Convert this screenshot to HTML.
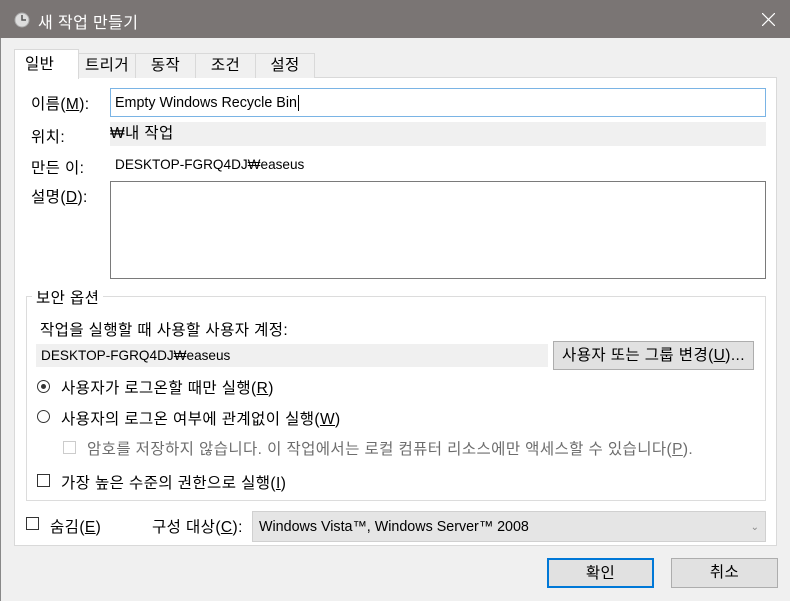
<!DOCTYPE html>
<html><head><meta charset="utf-8"><style>
*{box-sizing:border-box;margin:0;padding:0}
body{width:790px;height:601px;background:#f0f0f0;font-family:"Liberation Sans","Noto Sans CJK KR",sans-serif;font-size:15.5px;letter-spacing:.4px;color:#000;position:relative;overflow:hidden}
.a{position:absolute;white-space:nowrap}
.l{font-size:14px;letter-spacing:0}
.title{left:0;top:0;width:790px;height:38px;background:#7a7574;color:#fff;font-size:16px}
.panel{left:14px;top:77px;width:763px;height:469px;background:#fff;border:1px solid #d9d9d9}
.tab{top:53px;height:25px;background:#f0f0f0;border:1px solid #d9d9d9;border-bottom:none;text-align:center;line-height:24px}
.field{background:#f0f0f0}
.btn{background:#e1e1e1;border:1px solid #adadad;text-align:center}
.box{width:13px;height:13px;border:1px solid #333;background:#fff}
.rad{width:13px;height:13px;border:1px solid #333;border-radius:50%;background:#fff}
u{text-decoration:underline}
</style></head><body>
<div class="a" style="left:0;top:38px;width:1px;height:563px;background:#888"></div>
<div class="a title">
 <svg class="a" style="left:14px;top:12px" width="16" height="16"><circle cx="8" cy="8" r="7" fill="#ddd" stroke="#aaa"/><path d="M8 3v5h4" stroke="#555" stroke-width="1.5" fill="none"/></svg>
 <span class="a" style="left:38px;top:9px">새 작업 만들기</span>
 <svg class="a" style="left:762px;top:13px" width="13" height="13"><path d="M0 0L13 13M13 0L0 13" stroke="#fff" stroke-width="1.2"/></svg>
</div>
<div class="a panel"></div>
<div class="a tab" style="left:78px;width:58px">트리거</div>
<div class="a tab" style="left:135px;width:61px">동작</div>
<div class="a tab" style="left:195px;width:61px">조건</div>
<div class="a tab" style="left:255px;width:60px">설정</div>
<div class="a" style="left:14px;top:49px;width:65px;height:30px;background:#fff;border:1px solid #d9d9d9;border-bottom:none;padding-left:10px;line-height:30px">일반</div>

<div class="a" style="left:31px;top:92px">이름(<u>M</u>):</div>
<div class="a l" style="left:110px;top:88px;width:656px;height:29px;border:1px solid #7ab4e5;background:#fff;padding-left:4px;line-height:29px;font-size:14.3px">Empty Windows Recycle Bin<span style="border-left:1px solid #000;margin-left:1px"></span></div>
<div class="a" style="left:31px;top:125px">위치:</div>
<div class="a field" style="left:110px;top:122px;width:656px;height:24px;line-height:23px">₩내 작업</div>
<div class="a" style="left:31px;top:156px">만든 이:</div>
<div class="a l" style="left:115px;top:157px;font-size:13.6px">DESKTOP-FGRQ4DJ₩easeus</div>
<div class="a" style="left:31px;top:185px">설명(<u>D</u>):</div>
<div class="a" style="left:110px;top:181px;width:656px;height:98px;border:1px solid #7a7a7a;background:#fff"></div>

<div class="a" style="left:26px;top:296px;width:740px;height:205px;border:1px solid #dcdcdc"></div>
<div class="a" style="left:32px;top:286px;background:#fff;padding:0 4px">보안 옵션</div>
<div class="a" style="left:40px;top:318px">작업을 실행할 때 사용할 사용자 계정:</div>
<div class="a field l" style="left:36px;top:344px;width:512px;height:23px;padding-left:5px;line-height:23px;font-size:13.6px">DESKTOP-FGRQ4DJ₩easeus</div>
<div class="a btn" style="left:553px;top:341px;width:201px;height:29px;line-height:27px">사용자 또는 그룹 변경(<u>U</u>)...</div>
<div class="a rad" style="left:37px;top:380px"></div><div class="a" style="left:41px;top:384px;width:5px;height:5px;border-radius:50%;background:#333"></div>
<div class="a" style="left:61px;top:376px">사용자가 로그온할 때만 실행(<u>R</u>)</div>
<div class="a rad" style="left:37px;top:410px"></div>
<div class="a" style="left:61px;top:407px">사용자의 로그온 여부에 관계없이 실행(<u>W</u>)</div>
<div class="a box" style="left:63px;top:441px;border-color:#ccc"></div>
<div class="a" style="left:87px;top:437px;color:#6d6d6d">암호를 저장하지 않습니다. 이 작업에서는 로컬 컴퓨터 리소스에만 액세스할 수 있습니다(<u>P</u>).</div>
<div class="a box" style="left:37px;top:474px"></div>
<div class="a" style="left:61px;top:471px">가장 높은 수준의 권한으로 실행(<u>I</u>)</div>

<div class="a box" style="left:26px;top:517px"></div>
<div class="a" style="left:50px;top:515px">숨김(<u>E</u>)</div>
<div class="a" style="left:152px;top:515px">구성 대상(<u>C</u>):</div>
<div class="a l" style="left:252px;top:511px;width:514px;height:31px;background:#e5e5e5;border:1px solid #d0d0d0;padding-left:6px;line-height:31px;font-size:14.3px">Windows Vista™, Windows Server™ 2008<span class="a" style="right:6px;top:0;color:#888;font-size:10px">⌄</span></div>

<div class="a btn" style="left:547px;top:558px;width:107px;height:30px;border:2px solid #0078d7;line-height:27px">확인</div>
<div class="a btn" style="left:671px;top:558px;width:107px;height:30px;line-height:28px">취소</div>
</body></html>
